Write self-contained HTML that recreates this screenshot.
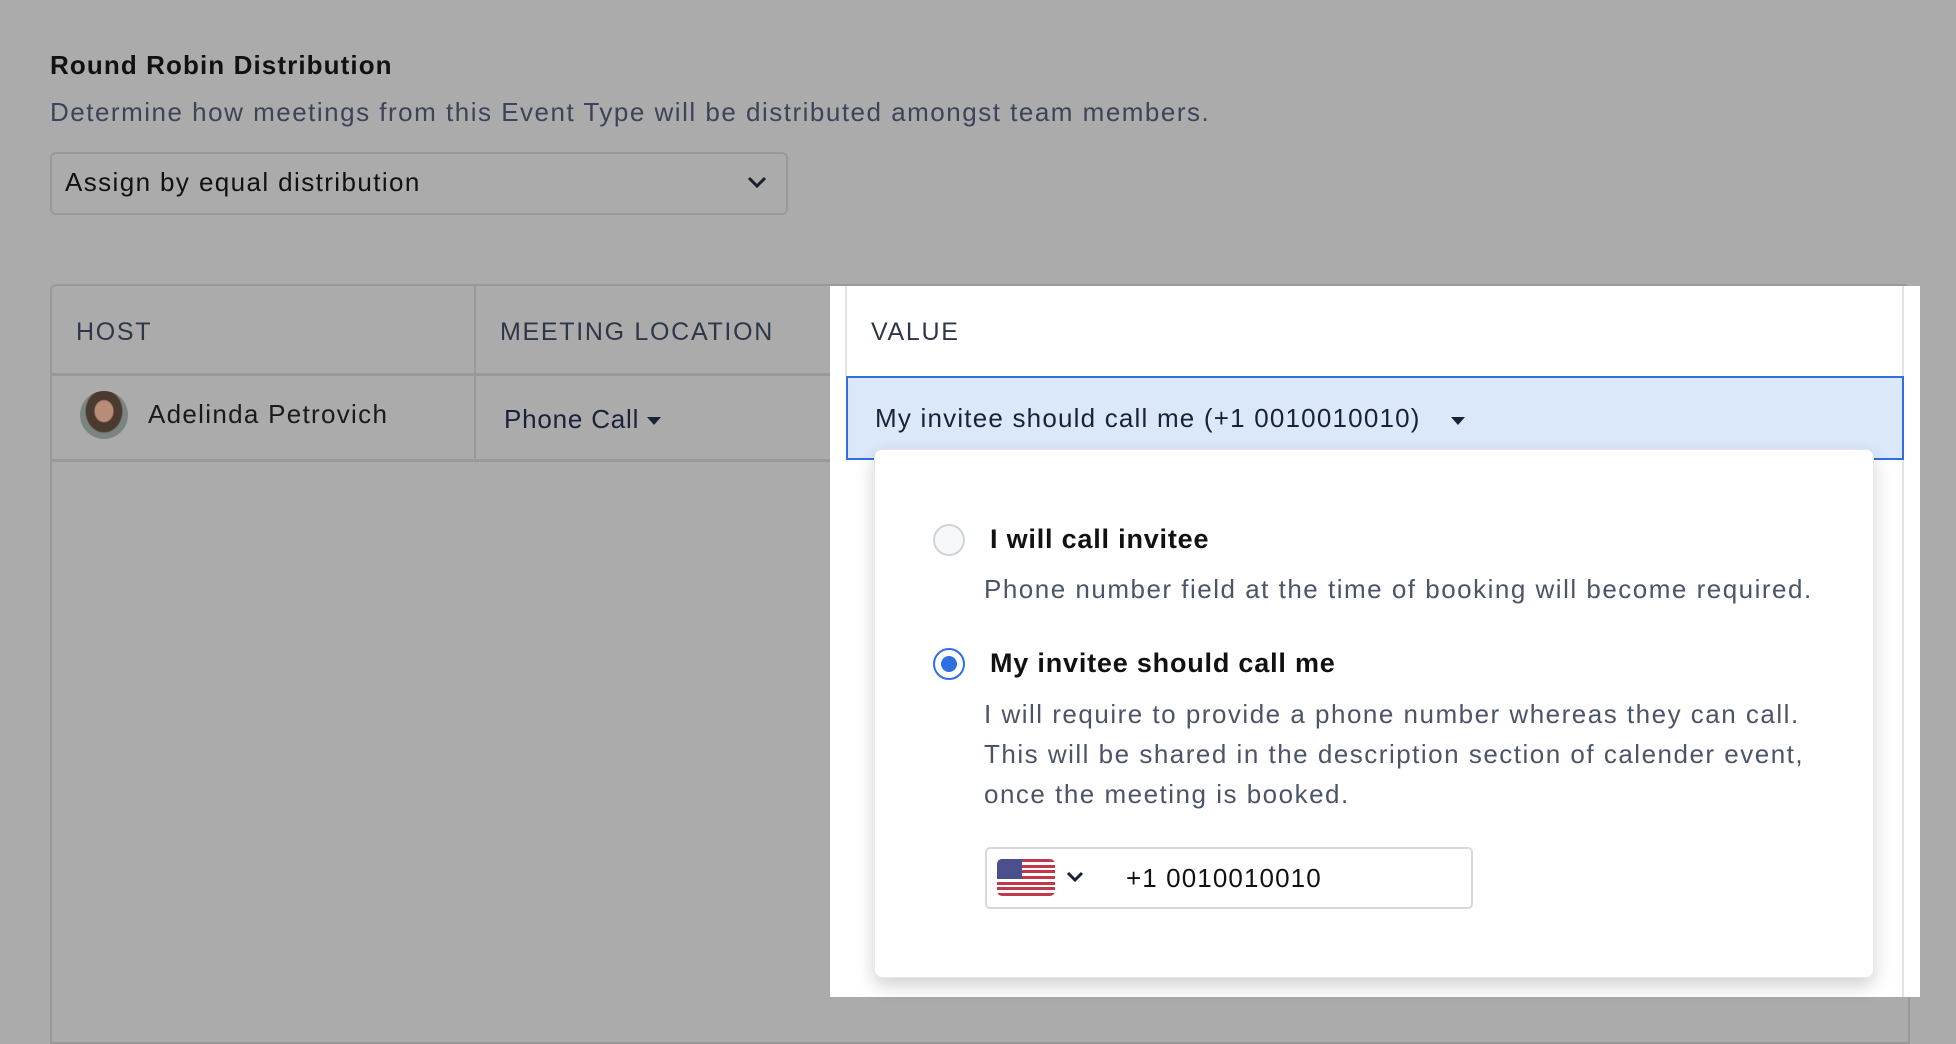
<!DOCTYPE html>
<html><head><meta charset="utf-8"><style>
*{box-sizing:border-box;margin:0;padding:0}
body{width:1956px;height:1036px;overflow:hidden;background:#ababab;font-family:"Liberation Sans",sans-serif;position:relative;color:#1a202c}
.a{position:absolute;white-space:nowrap}
.h{font-size:25px;color:#2d3748;letter-spacing:1.7px}
.d{color:#4a5568;font-size:26px;letter-spacing:1.5px}
</style></head><body>
<div class="a" style="left:50px;top:50px;font-size:26px;font-weight:bold;color:#111;letter-spacing:1.1px">Round Robin Distribution</div>
<div class="a" style="left:50px;top:97px;font-size:26px;color:#3b4558;letter-spacing:1.5px">Determine how meetings from this Event Type will be distributed amongst team members.</div>
<div class="a" style="left:50px;top:152px;width:738px;height:63px;border:2px solid #999;border-radius:6px;background:#ababab"></div>
<div class="a" style="left:65px;top:167px;font-size:26px;color:#111;letter-spacing:1.4px">Assign by equal distribution</div>
<svg class="a" style="left:746px;top:174px" width="22" height="16" viewBox="0 0 22 16"><path d="M3 4l8 8 8-8" fill="none" stroke="#1a202c" stroke-width="3"/></svg>

<div class="a" style="left:50px;top:284px;width:1860px;height:760px;border:2px solid #999;border-radius:6px 6px 0 0"></div>
<div class="a" style="left:50px;top:373px;width:780px;height:3px;background:#999"></div>
<div class="a" style="left:50px;top:459px;width:780px;height:3px;background:#999"></div>
<div class="a" style="left:474px;top:284px;width:2px;height:177px;background:#999"></div>
<div class="a h" style="left:76px;top:318px">HOST</div>
<div class="a h" style="left:500px;top:318px">MEETING LOCATION</div>
<div class="a" style="left:80px;top:391px;width:48px;height:48px;border-radius:50%;background:radial-gradient(ellipse at 50% 42%,#b88c76 0 26%,#4a3a30 30% 52%,#7a8580 56%)"></div>
<div class="a" style="left:148px;top:399px;font-size:26px;color:#1a1a1a;letter-spacing:1.3px">Adelinda Petrovich</div>
<div class="a" style="left:504px;top:404px;font-size:26px;color:#1a2238;letter-spacing:0.8px">Phone Call</div>
<div class="a" style="left:647px;top:417px;width:0;height:0;border-left:7px solid transparent;border-right:7px solid transparent;border-top:8px solid #1a2238"></div>

<div class="a" style="left:830px;top:286px;width:1090px;height:711px;background:#fff"></div>
<div class="a" style="left:845px;top:286px;width:2px;height:90px;background:#e2e4e8"></div>
<div class="a" style="left:1902px;top:286px;width:2px;height:711px;background:#e2e4e8"></div>
<div class="a h" style="left:871px;top:318px">VALUE</div>
<div class="a" style="left:846px;top:376px;width:1058px;height:84px;background:#dbe8fa;border:2px solid #2f6fe0"></div>
<div class="a" style="left:875px;top:403px;font-size:26px;color:#1a2238;letter-spacing:1.2px">My invitee should call me (+1 0010010010)</div>
<div class="a" style="left:1451px;top:417px;width:0;height:0;border-left:7px solid transparent;border-right:7px solid transparent;border-top:8px solid #1a2238"></div>

<div class="a" style="left:874px;top:449px;width:1000px;height:529px;background:#fff;border:1px solid #e5e7eb;border-radius:8px;box-shadow:0 8px 18px rgba(0,0,0,0.18)"></div>
<div class="a" style="left:933px;top:524px;width:32px;height:32px;border-radius:50%;border:2px solid #cfd3da;background:#f7f8fa"></div>
<div class="a" style="left:990px;top:524px;font-size:27px;font-weight:bold;color:#111;letter-spacing:0.8px">I will call invitee</div>
<div class="a d" style="left:984px;top:574px">Phone number field at the time of booking will become required.</div>
<div class="a" style="left:933px;top:648px;width:32px;height:32px;border-radius:50%;border:2px solid #2f6fe0;background:#fff"></div>
<div class="a" style="left:941px;top:656px;width:16px;height:16px;border-radius:50%;background:#2f6fe0"></div>
<div class="a" style="left:990px;top:648px;font-size:27px;font-weight:bold;color:#111;letter-spacing:0.8px">My invitee should call me</div>
<div class="a d" style="left:984px;top:694px;line-height:40px">I will require to provide a phone number whereas they can call.<br>This will be shared in the description section of calender event,<br>once the meeting is booked.</div>
<div class="a" style="left:985px;top:847px;width:488px;height:62px;border:2px solid #d5d8de;border-radius:5px"></div>
<svg class="a" style="left:997px;top:859px" width="58" height="37" viewBox="0 0 58 37">
<defs><clipPath id="c"><rect width="58" height="37" rx="5"/></clipPath></defs>
<g clip-path="url(#c)"><rect width="58" height="37" fill="#fff"/>
<g fill="#c0384a"><rect y="0" width="58" height="3"/><rect y="6" width="58" height="3"/><rect y="11" width="58" height="3"/><rect y="17" width="58" height="3"/><rect y="23" width="58" height="3"/><rect y="28" width="58" height="3"/><rect y="34" width="58" height="3"/></g>
<rect width="25" height="20" fill="#4b4f8e"/></g></svg>
<svg class="a" style="left:1065px;top:870px" width="20" height="14" viewBox="0 0 20 14"><path d="M3 3l7 7 7-7" fill="none" stroke="#1a2238" stroke-width="3"/></svg>
<div class="a" style="left:1126px;top:863px;font-size:26px;color:#111;letter-spacing:1.1px">+1 0010010010</div>
</body></html>
